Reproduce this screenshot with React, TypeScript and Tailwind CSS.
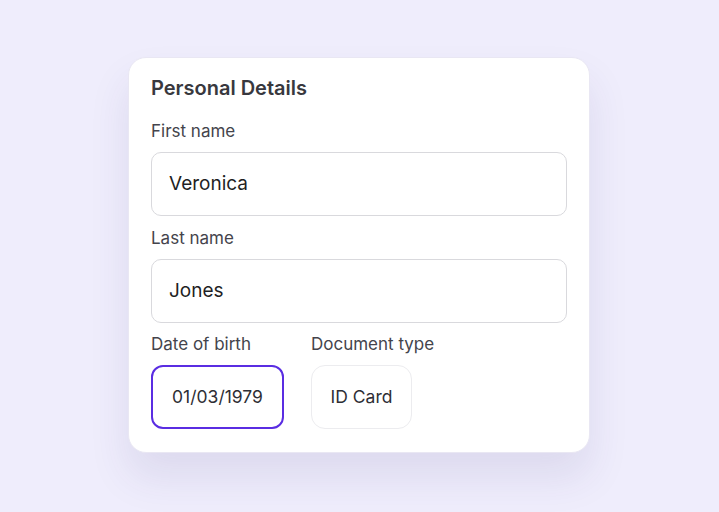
import React from 'react';

const Field: React.FC<{ label: string; value: string }> = ({ label, value }) => (
  <div className="flex flex-col">
    <label className="text-[17px] leading-[21px] text-[#44444c]">{label}</label>
    <div className="mt-[10px] h-[64px] rounded-[10px] border border-[#d9d9dd] bg-white px-[17px] flex items-center text-[19px] text-[#1f1f24]">
      {value}
    </div>
  </div>
);

const App: React.FC = () => {
  return (
    <div
      className="w-[719px] h-[512px] bg-[#efedfc] flex justify-center overflow-hidden"
      style={{ fontFamily: 'Inter, "Noto Sans", sans-serif' }}
    >
      <div className="mt-[57px] ml-[-1px] w-[462px] h-[396px] rounded-[18px] bg-white border border-[#e9e7f3] shadow-[0_24px_40px_rgba(60,50,120,0.10)] px-[22px] pt-[18px]">
        <h2 className="text-[20px] leading-6 font-semibold text-[#38383e]">Personal Details</h2>

        <div className="mt-[21px] flex flex-col gap-[12px]">
          <Field label="First name" value="Veronica" />
          <Field label="Last name" value="Jones" />
        </div>

        <div className="mt-[11px] flex gap-[27px]">
          <div className="flex flex-col">
            <label className="text-[17px] leading-[21px] text-[#44444c]">Date of birth</label>
            <div className="mt-[10px] h-[64px] w-[133px] rounded-[12px] border-2 border-[#5a2de2] flex items-center justify-center text-[17.5px] text-[#2e2e34]">
              01/03/1979
            </div>
          </div>
          <div className="flex flex-col">
            <label className="text-[17px] leading-[21px] text-[#44444c]">Document type</label>
            <div className="mt-[10px] h-[64px] w-[101px] rounded-[14px] border border-[#ececef] flex items-center justify-center text-[17.5px] text-[#2e2e34]">
              ID Card
            </div>
          </div>
        </div>
      </div>
    </div>
  );
};

export default App;
